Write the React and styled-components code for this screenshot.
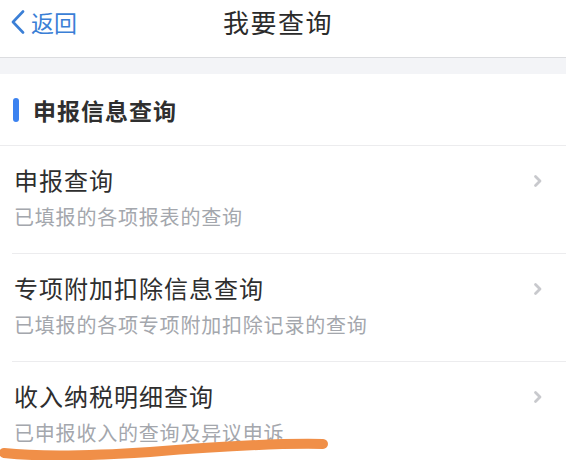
import React from "react";
import styled, { createGlobalStyle } from "styled-components";

const Global = createGlobalStyle`
  html, body { margin: 0; padding: 0; background: #fff; }
  body { font-family: "Noto Sans CJK SC", "Noto Sans", sans-serif; }
`;

const Page = styled.div`
  width: 566px;
  position: relative;
  background: #fff;
`;

const Header = styled.header`
  display: grid;
  grid-template-columns: 1fr auto 1fr;
  align-items: center;
  border-bottom: 1px solid #dcdde0;
  box-sizing: border-box;
  height: 58px;
  padding-right: 10px;
`;

const Back = styled.div`
  display: flex;
  align-items: center;
  gap: 6px;
  padding-left: 11px;
  color: #3b7fd6;
  font-size: 23px;
  margin-top: -14px;
`;

const Title = styled.div`
  font-size: 26px;
  color: #2b2b2b;
  margin-top: -14px;
  letter-spacing: 1.5px;
`;

const Band = styled.div`
  height: 16px;
  background: #f3f4f7;
`;

const SectionHead = styled.div`
  height: 72px;
  display: flex;
  align-items: center;
  gap: 14px;
  padding-left: 13px;
  border-bottom: 1px solid #ececee;
  box-sizing: border-box;
`;

const Bar = styled.span`
  width: 6px;
  height: 24px;
  border-radius: 3px;
  background: #3b82f0;
`;

const SectionTitle = styled.div`
  font-size: 23px;
  font-weight: 700;
  color: #2f2f2f;
  letter-spacing: 1px;
`;

const List = styled.div`
  padding-left: 12px;
`;

const Row = styled.div`
  height: 108px;
  box-sizing: border-box;
  padding: 18px 0 0 2px;
  display: grid;
  grid-template-columns: 1fr 33px;
  border-bottom: ${(p) => (p.$last ? "none" : "1px solid #ececee")};
`;

const Texts = styled.div`
  display: flex;
  flex-direction: column;
`;

const RowTitle = styled.div`
  font-size: 24px;
  line-height: 32px;
  color: #2e2e2e;
  letter-spacing: 1px;
`;

const RowSub = styled.div`
  font-size: 20px;
  line-height: 28px;
  margin-top: 7px;
  color: #a4a7ad;
  letter-spacing: 0.8px;
`;

const Chevron = styled.svg`
  width: 10px;
  height: 14px;
  margin-top: 10px;
`;

const Scribble = styled.svg`
  position: absolute;
  left: 0;
  top: 432px;
  width: 340px;
  height: 28px;
  pointer-events: none;
`;

const items = [
  { t: "申报查询", s: "已填报的各项报表的查询" },
  { t: "专项附加扣除信息查询", s: "已填报的各项专项附加扣除记录的查询" },
  { t: "收入纳税明细查询", s: "已申报收入的查询及异议申诉" },
];

export default function App() {
  return (
    <>
      <Global />
      <Page>
        <Header>
          <Back>
            <svg width="14" height="24" viewBox="0 0 14 24">
              <path d="M12 1.5 L2 12 L12 22.5" fill="none" stroke="#3b7fd6" strokeWidth="2.6" strokeLinecap="round" strokeLinejoin="round" />
            </svg>
            <span>返回</span>
          </Back>
          <Title>我要查询</Title>
          <div />
        </Header>
        <Band />
        <SectionHead>
          <Bar />
          <SectionTitle>申报信息查询</SectionTitle>
        </SectionHead>
        <List>
          {items.map((it, i) => (
            <Row key={i} $last={i === items.length - 1}>
              <Texts>
                <RowTitle>{it.t}</RowTitle>
                <RowSub>{it.s}</RowSub>
              </Texts>
              <Chevron viewBox="0 0 10 14">
                <path d="M2.5 2.5 L7 7 L2.5 11.5" fill="none" stroke="#c8c9cd" strokeWidth="2.8" strokeLinecap="round" strokeLinejoin="round" />
              </Chevron>
            </Row>
          ))}
        </List>
        <Scribble viewBox="0 0 340 28">
          <path d="M4 21 C 40 25, 90 24, 150 20 C 210 15, 270 11, 323 12" fill="none" stroke="#f08f48" strokeWidth="10" strokeLinecap="round" />
        </Scribble>
      </Page>
    </>
  );
}
